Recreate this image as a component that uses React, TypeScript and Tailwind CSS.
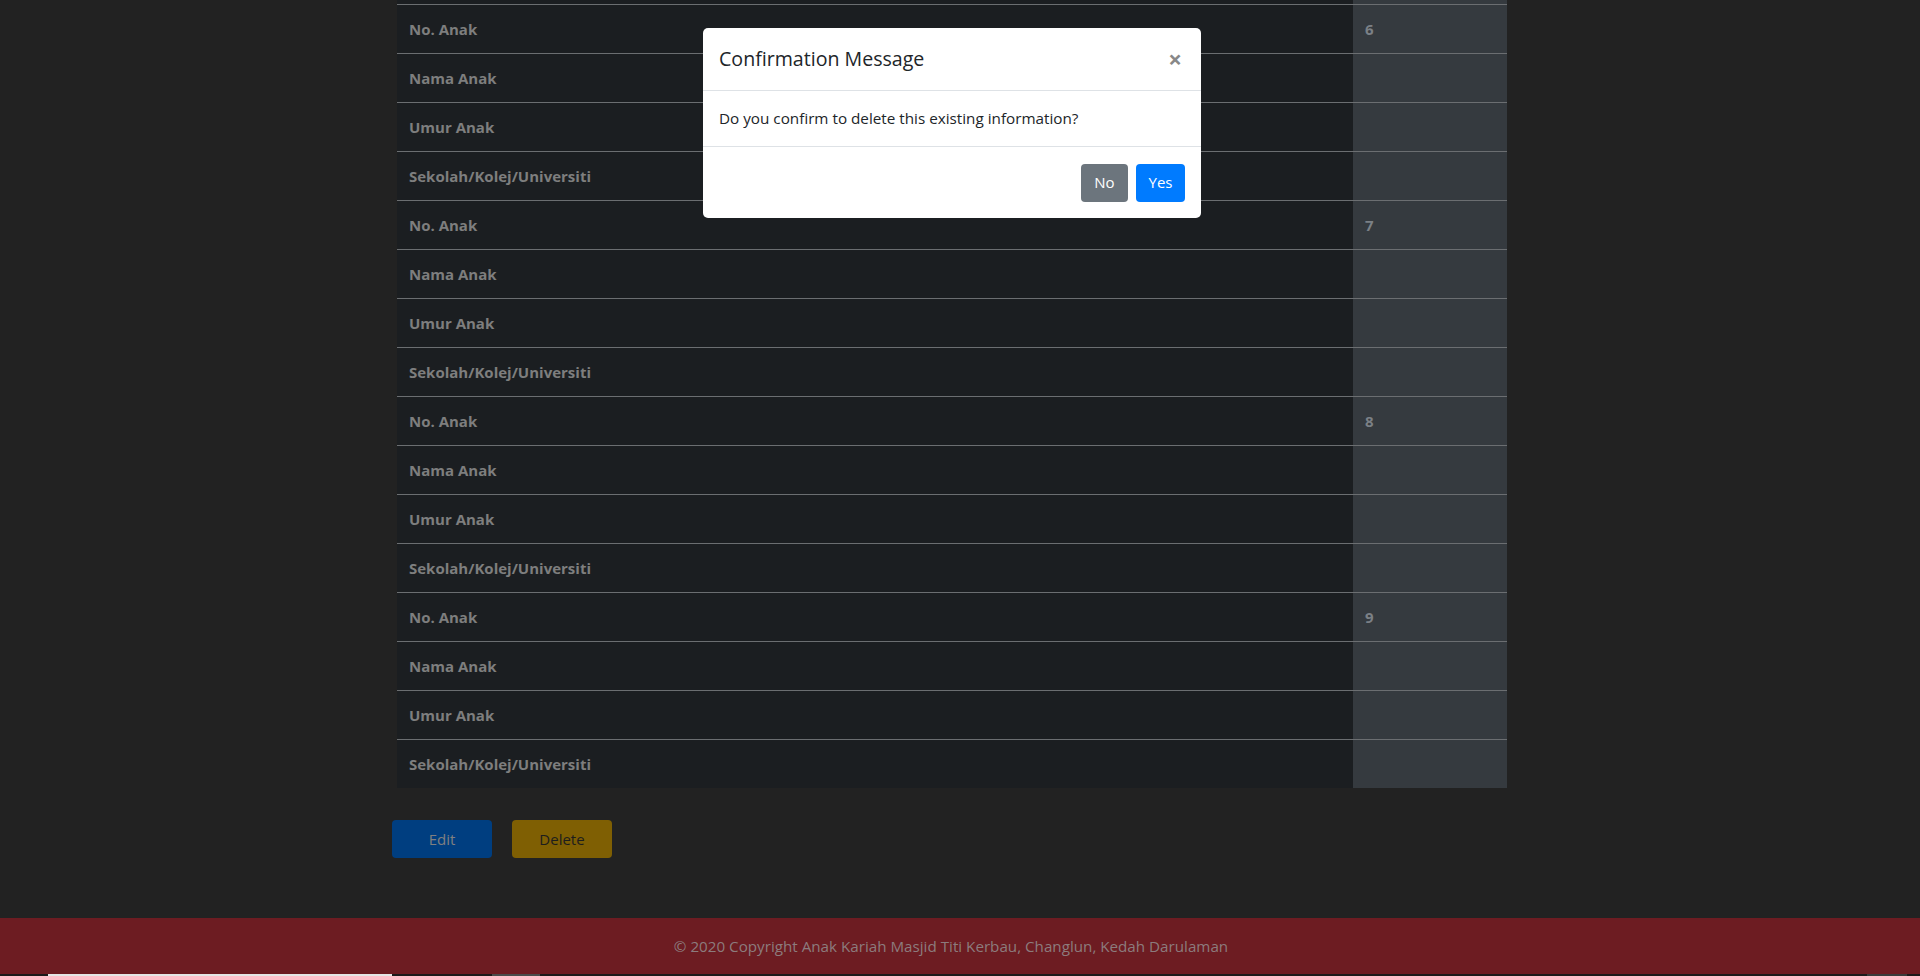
const kids = [6, 7, 8, 9];
const labels = ['No. Anak', 'Nama Anak', 'Umur Anak', 'Sekolah/Kolej/Universiti'];

const font = { fontFamily: '"Open Sans", "Noto Sans", sans-serif' };

export default function App() {
  return (
    <div className="relative h-[976px] w-full overflow-hidden bg-[#222222]" style={font}>
      <main className="pl-[392px]">
        {/* Children table (scrolled, top row cut off) */}
        <div className="ml-[5px] w-[1110px]">
          <div className="flex h-[4px]">
            <div className="flex-1 bg-[#1b1e21]" />
            <div className="w-[154px] bg-[#353a3f]" />
          </div>
          {kids.map((no) =>
            labels.map((label, i) => (
              <div key={`${no}-${label}`} className="flex border-t border-[#6b6e71]">
                <div className="flex h-[48px] flex-1 items-center bg-[#1b1e21] px-3 text-[15px] font-bold text-[#7e7e7e]">
                  {label}
                </div>
                <div className="flex h-[48px] w-[154px] items-center bg-[#353a3f] px-3 text-[15px] font-bold text-[#7b8086]">
                  {i === 0 ? no : ''}
                </div>
              </div>
            ))
          )}
        </div>

        <div className="mt-[32px] flex gap-5">
          <button className="h-[38px] w-[100px] rounded bg-[#003e80] text-[15px] text-[#808080]">Edit</button>
          <button className="h-[38px] w-[100px] rounded bg-[#7f5f03] text-[15px] text-[#1d1d1d]">Delete</button>
        </div>
      </main>

      <footer className="mt-[60px] flex h-[56px] items-center justify-center bg-[#6d1c22] pr-[18px] text-[15.2px] text-[#8c7b7d]">
        © 2020 Copyright Anak Kariah Masjid Titi Kerbau, Changlun, Kedah Darulaman
      </footer>
      <div className="relative h-[3px] bg-[#1d1a1b]">
        <div className="absolute left-[48px] top-0 h-[3px] w-[344px] bg-[#e6e6e6]" />
        <div className="absolute left-[492px] top-0 h-[3px] w-[48px] bg-[#4a4a4a]" />
        <div className="absolute left-[1867px] top-0 h-[3px] w-[40px] bg-[#3a3a3a]" />
      </div>

      {/* Confirmation modal */}
      <div className="absolute left-[703px] top-[28px] w-[498px] rounded-[5px] bg-white text-[#212529]">
        <div className="flex h-[63px] items-center justify-between border-b border-[#dee2e6] px-4">
          <h5 className="text-[19.6px] font-medium">Confirmation Message</h5>
          <span className="mr-[3px] text-[24px] font-bold leading-none text-[#888888]">×</span>
        </div>
        <div className="flex h-[56px] items-center border-b border-[#dee2e6] px-4 text-[15.25px]">
          Do you confirm to delete this existing information?
        </div>
        <div className="flex h-[71px] items-center justify-end gap-2 px-4">
          <button className="h-[38px] w-[47px] rounded bg-[#6c757d] text-[15px] text-white">No</button>
          <button className="h-[38px] w-[49px] rounded bg-[#007bff] text-[15px] text-white">Yes</button>
        </div>
      </div>
    </div>
  );
}
